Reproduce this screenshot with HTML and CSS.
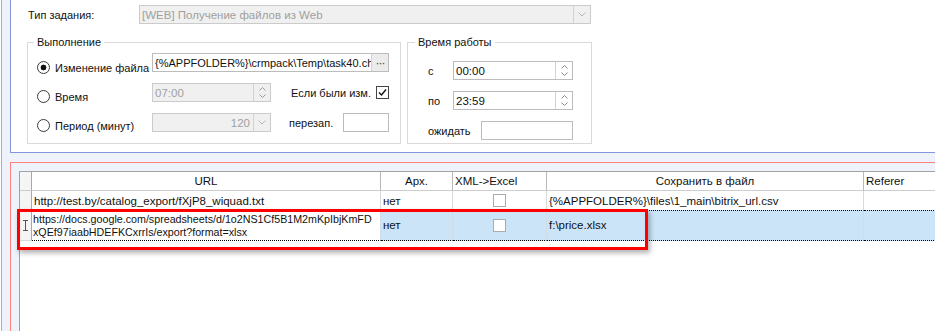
FILE: index.html
```html
<!DOCTYPE html>
<html lang="ru">
<head>
  <meta charset="UTF-8">
  <title>Задание: получение файлов из Web</title>
  <link rel="stylesheet" href="styles.css">
</head>
<body>
  <div class="screen">

    <!-- Параметры задания -->
    <div class="panel-top">
      <div class="task-row">
        <span class="task-label">Тип задания:</span>
        <div class="field combo-task disabled">
          <span class="val">[WEB] Получение файлов из Web</span>
          <span class="btn"><svg width="8" height="5" viewBox="0 0 8 5"><path d="M0.5 0.5 L4 4 L7.5 0.5" fill="none" stroke="#b4b4b4"/></svg></span>
        </div>
      </div>

      <div class="groups">
        <fieldset class="group group-run">
          <legend>Выполнение</legend>
          <div class="run-body">
            <div class="opts">
              <div class="opt"><span class="radio on"></span>Изменение файла</div>
              <div class="opt"><span class="radio"></span>Время</div>
              <div class="opt"><span class="radio"></span>Период (минут)</div>
            </div>
            <div class="controls">
              <div class="field path">
                <span class="val">{%APPFOLDER%}\crmpack\Temp\task40.chk</span>
                <span class="btn dots">···</span>
              </div>
              <div class="field disabled">
                <span class="val">07:00</span>
                <span class="btn spin">
                  <svg width="7" height="11" viewBox="0 0 7 11"><path d="M0.5 3.5 L3.5 0.5 L6.5 3.5 M0.5 7.5 L3.5 10.5 L6.5 7.5" fill="none" stroke="#9a9a9a"/></svg>
                </span>
              </div>
              <div class="side">
                <span>Если были изм.</span>
                <span class="check on"><svg width="11" height="11" viewBox="0 0 11 11"><path d="M2 5.5 L4.5 8 L9 2.5" fill="none" stroke="#111" stroke-width="1.4"/></svg></span>
              </div>
              <div class="field disabled">
                <span class="val num">120</span>
                <span class="btn"><svg width="8" height="5" viewBox="0 0 8 5"><path d="M0.5 0.5 L4 4 L7.5 0.5" fill="none" stroke="#b4b4b4"/></svg></span>
              </div>
              <div class="side side-restart">
                <span>перезап.</span>
                <div class="field small"></div>
              </div>
            </div>
          </div>
        </fieldset>

        <fieldset class="group group-time">
          <legend>Время работы</legend>
          <div class="time-body">
            <div class="time-row">
              <span>с</span>
              <div class="field time">
                <span class="val">00:00</span>
                <span class="btn spin">
                  <svg width="7" height="11" viewBox="0 0 7 11"><path d="M0.5 3.5 L3.5 0.5 L6.5 3.5 M0.5 7.5 L3.5 10.5 L6.5 7.5" fill="none" stroke="#8a8a8a"/></svg>
                </span>
              </div>
            </div>
            <div class="time-row">
              <span>по</span>
              <div class="field time">
                <span class="val">23:59</span>
                <span class="btn spin">
                  <svg width="7" height="11" viewBox="0 0 7 11"><path d="M0.5 3.5 L3.5 0.5 L6.5 3.5 M0.5 7.5 L3.5 10.5 L6.5 7.5" fill="none" stroke="#8a8a8a"/></svg>
                </span>
              </div>
            </div>
            <div class="time-row">
              <span>ожидать</span>
              <div class="field wait"></div>
            </div>
          </div>
        </fieldset>
      </div>
    </div>

    <!-- Список URL -->
    <div class="panel-grid">
      <div class="grid">
        <table class="urls">
          <colgroup>
            <col class="c-ind"><col class="c-url"><col class="c-arch"><col class="c-xml"><col class="c-save"><col class="c-ref">
          </colgroup>
          <thead>
            <tr>
              <th class="ind"></th>
              <th>URL</th>
              <th>Арх.</th>
              <th class="left">XML-&gt;Excel</th>
              <th>Сохранить в файл</th>
              <th class="left">Referer</th>
            </tr>
          </thead>
          <tbody>
            <tr>
              <td class="ind"></td>
              <td>http://test.by/catalog_export/fXjP8_wiquad.txt</td>
              <td>нет</td>
              <td class="chk"><span class="box"></span></td>
              <td>{%APPFOLDER%}\files\1_main\bitrix_url.csv</td>
              <td></td>
            </tr>
            <tr class="current">
              <td class="ind"><svg width="5" height="11" viewBox="0 0 5 11"><path d="M0 0.5 H5 M2.5 0.5 V10.5 M0 10.5 H5" fill="none" stroke="#555"/></svg></td>
              <td class="editing">https://docs.google.com/spreadsheets/d/1o2NS1Cf5B1M2mKpIbjKmFD<br>xQEf97iaabHDEFKCxrrIs/export?format=xlsx</td>
              <td>нет</td>
              <td class="chk"><span class="box"></span></td>
              <td>f:\price.xlsx</td>
              <td></td>
            </tr>
          </tbody>
        </table>
      </div>
      <div class="highlight"></div>
    </div>

  </div>
</body>
</html>
```

FILE: styles.css
```css
* {
  box-sizing: border-box;
}
body {
  margin: 0;
  background: #fff;
  font-family: "Liberation Sans", Arial, sans-serif;
  font-size: 11px;
  color: #111;
  overflow: hidden;
}
.screen {
  margin-left: 1px;
  border-left: 1px solid #ff8e8e;
  padding-left: 8px;
  background: #eef2fa;
  height: 331px;
}

/* верхняя панель */
.panel-top {
  background: #fff;
  border-left: 1px solid #8694dc;
  border-bottom: 1px solid #8694dc;
  padding: 5px 0 8px 16px;
}
.task-row {
  display: flex;
}
.task-label {
  width: 112px;
  padding: 4px 0 0 1px;
}
.combo-task {
  width: 452px;
}

.field {
  height: 19px;
  border: 1px solid #bcbcbc;
  background: #fff;
  display: flex;
  align-items: center;
  font-size: 11.5px;
}
.field .val {
  flex: 1;
  padding-left: 2px;
  overflow: hidden;
  white-space: nowrap;
}
.field .val.num {
  text-align: right;
  padding-right: 3px;
}
.field.path .val {
  font-size: 11px;
}
.field.disabled {
  background: #f0f0f0;
  border-color: #cbcbcb;
  color: #a0a0a0;
}
.field .btn {
  width: 17px;
  align-self: stretch;
  border-left: 1px solid #d2d2d2;
  display: flex;
  align-items: center;
  justify-content: center;
}
.field .dots {
  background: #ebebeb;
  color: #444;
  font-size: 12px;
  letter-spacing: -1px;
}

.groups {
  display: flex;
  gap: 6px;
  margin-top: 11px;
}
.group {
  margin: 0;
  border: 1px solid #dadada;
  min-width: 0;
}
.group legend {
  padding: 0 3px;
  line-height: 14px;
}
.group-run {
  width: 374px;
  padding: 4px 11px 11px 9px;
}
.group-run legend {
  margin-left: -3px;
}
.group-time {
  width: 185px;
  padding: 12px 18px 0 18px;
}
.group-time legend {
  margin-left: -11px;
}

.run-body {
  display: flex;
}
.opts {
  width: 115px;
  padding-top: 8px;
  display: flex;
  flex-direction: column;
  gap: 16px;
}
.opt {
  height: 13px;
  display: flex;
  align-items: center;
  gap: 5px;
}
.radio {
  width: 13px;
  height: 13px;
  border: 1px solid #3a3a3a;
  border-radius: 50%;
  background: #fff;
}
.radio.on {
  background: radial-gradient(circle, #111 0 2.6px, #fff 3.2px);
}
.controls {
  display: grid;
  grid-template-columns: 119px 118px;
  grid-auto-rows: 19px;
  row-gap: 11px;
}
.controls .path {
  grid-column: 1 / 3;
}
.side {
  display: flex;
  align-items: center;
  justify-content: space-between;
  padding-left: 20px;
}
.side-restart {
  padding-left: 18px;
}
.check {
  width: 13px;
  height: 13px;
  border: 1px solid #444;
  background: #fff;
  display: flex;
  align-items: center;
  justify-content: center;
}
.field.small {
  width: 46px;
}

.time-body {
  display: flex;
  flex-direction: column;
  gap: 11px;
}
.time-row {
  display: flex;
  align-items: center;
  justify-content: space-between;
}
.time-row > span {
  padding-left: 2px;
}
.field.time {
  width: 120px;
}
.field.wait {
  width: 92px;
}

/* нижняя панель с таблицей */
.panel-grid {
  position: relative;
  margin-top: 9px;
  border-top: 1px solid #ff8080;
  border-left: 1px solid #ff8080;
  padding: 8px 0 0 8px;
}
.grid {
  border-top: 1px solid #a2a2a2;
  border-left: 1px solid #a2a2a2;
  background: #fff;
  height: 200px;
  overflow: hidden;
}
.urls {
  table-layout: fixed;
  width: 1044px;
  border-collapse: separate;
  border-spacing: 0;
  font-size: 11.5px;
}
.c-ind { width: 12px; }
.c-url { width: 349px; }
.c-arch { width: 72px; }
.c-xml { width: 94px; }
.c-save { width: 317px; }
.c-ref { width: 200px; }

.urls th {
  height: 19px;
  font-weight: normal;
  text-align: center;
  padding: 0 2px;
  border-right: 1px solid #b8b8b8;
  border-bottom: 1px solid #cdcdcd;
  white-space: nowrap;
}
.urls th.left {
  text-align: left;
}
.urls td {
  height: 19px;
  padding: 0 2px;
  border-right: 1px solid #dadada;
  white-space: nowrap;
  overflow: hidden;
}
.urls .ind {
  padding: 0;
  background: #f5f5f5;
  border-right: 1px solid #a8a8a8;
  text-align: center;
}
.urls td.ind {
  border-bottom: 1px solid #dadada;
}
.urls td.chk {
  text-align: center;
}
.box {
  display: inline-block;
  width: 13px;
  height: 13px;
  border: 1px solid #ababab;
  background: #fff;
  vertical-align: middle;
}
.urls .current td {
  height: 31px;
  line-height: 13px;
  background: #cce4f7;
  border-top: 1px dotted #000;
  border-bottom: 1px dotted #000;
  border-right-color: #d0dde8;
}
.urls .current td.ind {
  background: #f5f5f5;
  border-top: none;
  border-bottom: 1px solid #dadada;
  border-right-color: #a8a8a8;
}
.urls .current td.editing {
  background: #fff;
  font-size: 10.7px;
  padding-left: 1px;
}
.ind svg {
  display: block;
  margin: 0 auto;
}

.highlight {
  position: absolute;
  left: 6px;
  top: 46px;
  width: 631px;
  height: 41px;
  border: 3px solid #f00;
  box-shadow: 2px 3px 5px rgba(0, 0, 0, 0.3);
}
```
